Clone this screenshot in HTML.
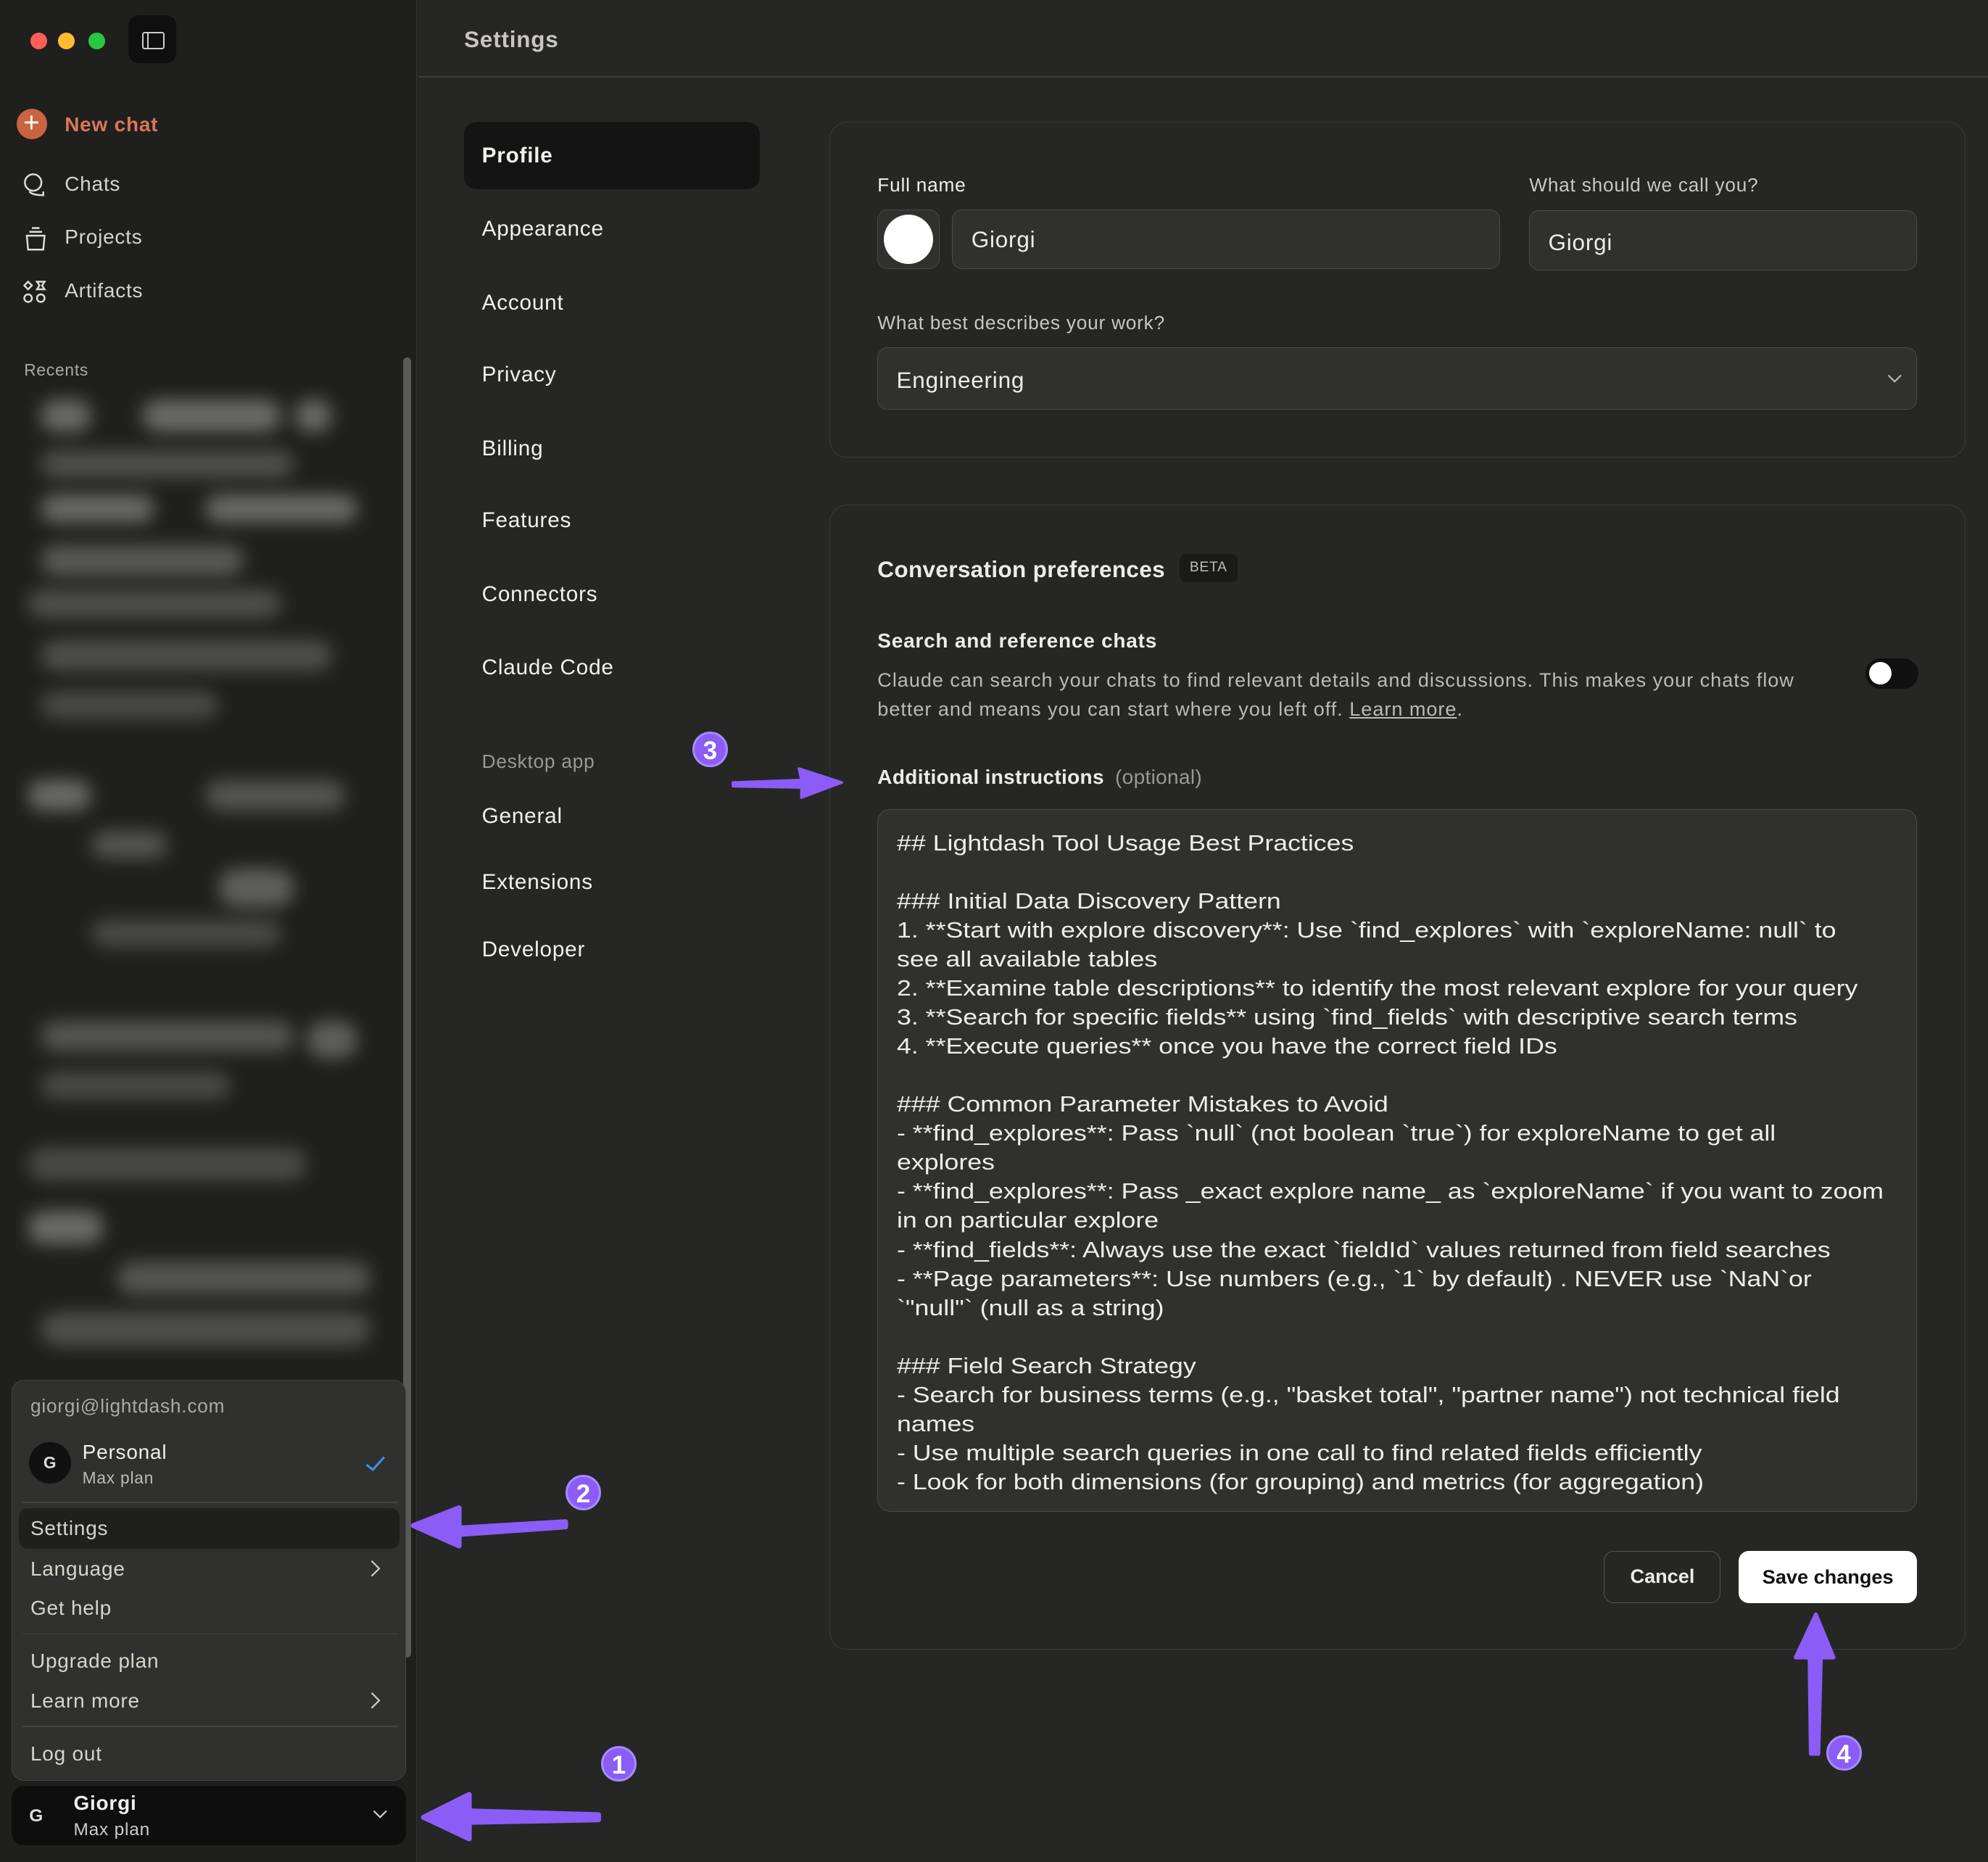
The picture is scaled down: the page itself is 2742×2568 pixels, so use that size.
<!DOCTYPE html>
<html><head><meta charset="utf-8"><style>
*{box-sizing:border-box;margin:0;padding:0}
html,body{width:2742px;height:2568px;overflow:hidden;background:#262624}
#z{zoom:1.749;width:1568px;height:1468px;position:relative;font-family:"Liberation Sans",sans-serif;color:#ececea;letter-spacing:0.45px}
.a{position:absolute}
#side{left:0;top:0;width:329px;height:1468px;background:#1f1f1e;border-right:1px solid #333}
.nav{font-size:16px;color:#d6d4cc}
.set{font-size:17px;color:#f2f1ec}
.card{border:1px solid #3a3a38;border-radius:14px;background:#262624}
.inp{background:#30302e;border:1px solid #4a4a47;border-radius:8px}
.lbl{font-size:15px;color:#c9c7bf}
.ta{font-size:17.3px;line-height:22.9px;color:#ededea;white-space:pre;letter-spacing:0;transform:scaleX(1.18);transform-origin:0 0}
.blob{position:absolute;background:#8a8a86;border-radius:20px;filter:blur(7px);opacity:.7}
.mi{font-size:16px;color:#d6d4cc;left:24px}
.badge{width:28px;height:28px;border-radius:50%;background:#8b5cf6;color:#fff;font-weight:bold;font-size:20px;text-align:center;line-height:28px;border:2px solid #a78bfa;letter-spacing:0}
</style></head><body><div id="z">
<div id="side" class="a">
 <div class="a" style="left:24px;top:26px;width:13px;height:13px;border-radius:50%;background:#fe5f57"></div>
 <div class="a" style="left:46px;top:26px;width:13px;height:13px;border-radius:50%;background:#febc2e"></div>
 <div class="a" style="left:70px;top:26px;width:13px;height:13px;border-radius:50%;background:#28c840"></div>
 <div class="a" style="left:101px;top:12px;width:38px;height:38px;border-radius:8px;background:#0f0f0f"></div>
 <div class="a" style="left:112px;top:25px;width:18px;height:14px;border:1.5px solid #ccc;border-radius:2px"></div>
 <div class="a" style="left:112px;top:25px;width:5px;height:14px;border-right:1.5px solid #ccc"></div>
 <div class="a" style="left:13px;top:86px;width:24px;height:24px;border-radius:50%;background:#c96442;color:#fff;text-align:center;line-height:23px;font-size:22px">+</div>
 <div class="a nav" style="left:51px;top:89px;color:#d97757;font-weight:bold">New chat</div>
 <svg class="a" style="left:17px;top:135px" width="22" height="22" viewBox="0 0 22 22" fill="none" stroke="#ddd" stroke-width="1.4"><circle cx="9" cy="9" r="6.5"/><path d="M6 16c2 3 8 3 11 3v-3"/></svg>
 <div class="a nav" style="left:51px;top:136px">Chats</div>
 <svg class="a" style="left:17px;top:178px" width="22" height="22" viewBox="0 0 22 22" fill="none" stroke="#ddd" stroke-width="1.4"><path d="M4 8h14l-1 11H5z M6 5h10 M8 2h6"/></svg>
 <div class="a nav" style="left:51px;top:178px">Projects</div>
 <svg class="a" style="left:17px;top:220px" width="22" height="22" viewBox="0 0 22 22" fill="none" stroke="#ddd" stroke-width="1.4"><path d="M5 2l3 3-3 3-3-3z M12 2h6l-2 3 2 3h-6l2-3z"/><circle cx="5" cy="15" r="3"/><circle cx="15" cy="15" r="3"/></svg>
 <div class="a nav" style="left:51px;top:220px">Artifacts</div>
 <div class="a" style="left:19px;top:284px;font-size:13px;color:#aaa">Recents</div>
 <div class="a" style="left:318px;top:282px;width:6px;height:1025px;border-radius:3px;background:#5a5a58"></div>
 <div class="a" style="left:12px;top:305px;width:290px;height:780px;overflow:hidden">
  <div class="blob" style="left:20px;top:10px;width:40px;height:26px"></div>
  <div class="blob" style="left:100px;top:10px;width:110px;height:26px"></div>
  <div class="blob" style="left:220px;top:10px;width:30px;height:26px"></div>
  <div class="blob" style="left:20px;top:50px;width:200px;height:22px;opacity:.45"></div>
  <div class="blob" style="left:20px;top:85px;width:90px;height:22px"></div>
  <div class="blob" style="left:150px;top:85px;width:120px;height:22px"></div>
  <div class="blob" style="left:20px;top:125px;width:160px;height:24px;opacity:.55"></div>
  <div class="blob" style="left:10px;top:160px;width:200px;height:22px;opacity:.45"></div>
  <div class="blob" style="left:20px;top:200px;width:230px;height:24px;opacity:.45"></div>
  <div class="blob" style="left:20px;top:240px;width:140px;height:22px;opacity:.4"></div>
  <div class="blob" style="left:10px;top:310px;width:50px;height:24px"></div>
  <div class="blob" style="left:150px;top:310px;width:110px;height:24px;opacity:.5"></div>
  <div class="blob" style="left:60px;top:350px;width:60px;height:22px;opacity:.5"></div>
  <div class="blob" style="left:160px;top:380px;width:60px;height:30px;opacity:.6"></div>
  <div class="blob" style="left:60px;top:420px;width:150px;height:22px;opacity:.4"></div>
  <div class="blob" style="left:20px;top:500px;width:200px;height:24px;opacity:.5"></div>
  <div class="blob" style="left:230px;top:500px;width:40px;height:30px;opacity:.6"></div>
  <div class="blob" style="left:20px;top:540px;width:150px;height:22px;opacity:.4"></div>
  <div class="blob" style="left:10px;top:600px;width:220px;height:26px;opacity:.4"></div>
  <div class="blob" style="left:10px;top:650px;width:60px;height:26px"></div>
  <div class="blob" style="left:80px;top:690px;width:200px;height:26px;opacity:.5"></div>
  <div class="blob" style="left:20px;top:730px;width:260px;height:26px;opacity:.45"></div>
 </div>
 <div class="a" style="left:9px;top:1088px;width:311px;height:316px;background:#30302e;border:1px solid #444;border-radius:10px"></div>
 <div class="a" style="left:24px;top:1100px;font-size:15px;color:#aaa">giorgi@lightdash.com</div>
 <div class="a" style="left:23px;top:1137px;width:33px;height:33px;border-radius:50%;background:#111;color:#ddd;text-align:center;line-height:33px;font-size:13px;font-weight:bold">G</div>
 <div class="a" style="left:65px;top:1136px;font-size:16px;color:#eee">Personal</div>
 <div class="a" style="left:65px;top:1158px;font-size:13px;color:#bbb">Max plan</div>
 <svg class="a" style="left:287px;top:1147px" width="18" height="14"><path d="M2 8l5 4 9-10" stroke="#3b8ee8" stroke-width="1.8" fill="none"/></svg>
 <div class="a" style="left:18px;top:1184px;width:296px;height:1px;background:#444"></div>
 <div class="a" style="left:15px;top:1189px;width:300px;height:32px;background:#1f1f1e;border-radius:7px"></div>
 <div class="a mi" style="top:1196px">Settings</div>
 <div class="a mi" style="top:1228px">Language</div>
 <svg class="a" style="left:291px;top:1230px" width="10" height="14"><path d="M2 1l6 6-6 6" stroke="#ccc" stroke-width="1.3" fill="none"/></svg>
 <div class="a mi" style="top:1259px">Get help</div>
 <div class="a" style="left:18px;top:1288px;width:296px;height:1px;background:#444"></div>
 <div class="a mi" style="top:1301px">Upgrade plan</div>
 <div class="a mi" style="top:1332px">Learn more</div>
 <svg class="a" style="left:291px;top:1334px" width="10" height="14"><path d="M2 1l6 6-6 6" stroke="#ccc" stroke-width="1.3" fill="none"/></svg>
 <div class="a" style="left:18px;top:1361px;width:296px;height:1px;background:#444"></div>
 <div class="a mi" style="top:1374px">Log out</div>
 <div class="a" style="left:9px;top:1408px;width:311px;height:47px;background:#0e0e0e;border-radius:10px"></div>
 <div class="a" style="left:23px;top:1424px;font-size:14px;font-weight:bold;color:#ddd">G</div>
 <div class="a" style="left:58px;top:1413px;font-size:16px;font-weight:bold;color:#eee">Giorgi</div>
 <div class="a" style="left:58px;top:1435px;font-size:14px;color:#ccc">Max plan</div>
 <svg class="a" style="left:293px;top:1426px" width="14" height="10"><path d="M2 2l5 5 5-5" stroke="#ccc" stroke-width="1.3" fill="none"/></svg>
</div>
<div class="a" style="left:366px;top:21px;font-size:18px;color:#c8c6be;font-weight:bold">Settings</div>
<div class="a" style="left:330px;top:60px;width:1238px;height:1px;background:#3d3d3b"></div>
<div class="a" style="left:366px;top:96px;width:233px;height:53px;background:#141414;border-radius:10px"></div>
<div class="a set" style="left:380px;top:113px;font-weight:bold">Profile</div>
<div class="a set" style="left:380px;top:171px">Appearance</div>
<div class="a set" style="left:380px;top:229px">Account</div>
<div class="a set" style="left:380px;top:286px">Privacy</div>
<div class="a set" style="left:380px;top:344px">Billing</div>
<div class="a set" style="left:380px;top:401px">Features</div>
<div class="a set" style="left:380px;top:459px">Connectors</div>
<div class="a set" style="left:380px;top:517px">Claude Code</div>
<div class="a" style="left:380px;top:592px;font-size:15px;color:#999">Desktop app</div>
<div class="a set" style="left:380px;top:634px">General</div>
<div class="a set" style="left:380px;top:686px">Extensions</div>
<div class="a set" style="left:380px;top:739px">Developer</div>

<div class="a card" style="left:654px;top:96px;width:896px;height:265px"></div>
<div class="a lbl" style="left:692px;top:137px;color:#eee">Full name</div>
<div class="a inp" style="left:692px;top:165px;width:49px;height:47px"></div>
<div class="a" style="left:697px;top:169px;width:39px;height:39px;border-radius:50%;background:#fff"></div>
<div class="a inp" style="left:751px;top:165px;width:432px;height:47px"></div>
<div class="a" style="left:766px;top:179px;font-size:18px">Giorgi</div>
<div class="a lbl" style="left:1206px;top:137px">What should we call you?</div>
<div class="a inp" style="left:1206px;top:166px;width:306px;height:47px"></div>
<div class="a" style="left:1221px;top:181px;font-size:18px">Giorgi</div>
<div class="a lbl" style="left:692px;top:246px">What best describes your work?</div>
<div class="a inp" style="left:692px;top:274px;width:820px;height:49px"></div>
<div class="a" style="left:707px;top:290px;font-size:18px">Engineering</div>
<svg class="a" style="left:1487px;top:294px" width="14" height="10"><path d="M2 2l5 5 5-5" stroke="#bbb" stroke-width="1.2" fill="none"/></svg>

<div class="a card" style="left:654px;top:398px;width:896px;height:903px"></div>
<div class="a" style="left:692px;top:439px;font-size:18px;font-weight:bold;letter-spacing:0.2px">Conversation preferences</div>
<div class="a" style="left:930px;top:437px;width:46px;height:22px;background:#1a1a19;border-radius:5px;font-size:11px;color:#bbb;text-align:center;line-height:22px">BETA</div>
<div class="a" style="left:692px;top:496px;font-size:16px;font-weight:bold">Search and reference chats</div>
<div class="a" style="left:692px;top:525px;width:780px;font-size:15.5px;line-height:23px;color:#bcbab2;letter-spacing:0.55px;white-space:nowrap">Claude can search your chats to find relevant details and discussions. This makes your chats flow<br>better and means you can start where you left off. <u>Learn more</u>.</div>
<div class="a" style="left:1471px;top:519px;width:42px;height:24px;border-radius:12px;background:#111"></div>
<div class="a" style="left:1474px;top:522px;width:18px;height:18px;border-radius:50%;background:#fff"></div>
<div class="a" style="left:692px;top:604px;font-size:16px;font-weight:bold;letter-spacing:0.2px">Additional instructions <span style="font-weight:normal;color:#999;margin-left:4px">(optional)</span></div>
<div class="a inp" style="left:692px;top:638px;width:820px;height:554px;border-radius:10px"></div>
<div class="a ta" style="left:707px;top:654px">## Lightdash Tool Usage Best Practices

### Initial Data Discovery Pattern
1. **Start with explore discovery**: Use `find_explores` with `exploreName: null` to
see all available tables
2. **Examine table descriptions** to identify the most relevant explore for your query
3. **Search for specific fields** using `find_fields` with descriptive search terms
4. **Execute queries** once you have the correct field IDs

### Common Parameter Mistakes to Avoid
- **find_explores**: Pass `null` (not boolean `true`) for exploreName to get all
explores
- **find_explores**: Pass _exact explore name_ as `exploreName` if you want to zoom
in on particular explore
- **find_fields**: Always use the exact `fieldId` values returned from field searches
- **Page parameters**: Use numbers (e.g., `1` by default) . NEVER use `NaN`or
`"null"` (null as a string)

### Field Search Strategy
- Search for business terms (e.g., "basket total", "partner name") not technical field
names
- Use multiple search queries in one call to find related fields efficiently
- Look for both dimensions (for grouping) and metrics (for aggregation)</div>
<div class="a" style="left:1265px;top:1223px;width:92px;height:41px;border:1px solid #555;border-radius:8px;font-size:15.5px;font-weight:bold;text-align:center;line-height:39px;letter-spacing:0">Cancel</div>
<div class="a" style="left:1371px;top:1223px;width:141px;height:41px;background:#fff;color:#111;border-radius:8px;font-size:15.5px;font-weight:bold;text-align:center;line-height:41px;letter-spacing:0">Save changes</div>

<svg class="a" style="left:0;top:0" width="1568" height="1468">
 <g fill="#8b5cf6" stroke="#8b5cf6" stroke-linejoin="round">
  <path d="M578 617 L632 615 L630 606 L664 617 L632 629 L632 621 L578 620Z" stroke-width="2"/>
  <path d="M446 1200 L362 1205 L362 1189 L326 1203 L362 1219 L362 1210 L446 1204Z" stroke-width="4"/>
  <path d="M472 1431 L370 1428 L370 1415 L334 1433 L370 1450 L370 1437 L472 1435Z" stroke-width="4"/>
  <path d="M1428 1383 L1427 1307 L1416 1307 L1432 1273 L1446 1307 L1436 1307 L1434 1383Z" stroke-width="3"/>
 </g>
</svg>
<div class="a badge" style="left:546px;top:577px">3</div>
<div class="a badge" style="left:446px;top:1163px">2</div>
<div class="a badge" style="left:474px;top:1377px">1</div>
<div class="a badge" style="left:1440px;top:1368px">4</div>
</div></body></html>
